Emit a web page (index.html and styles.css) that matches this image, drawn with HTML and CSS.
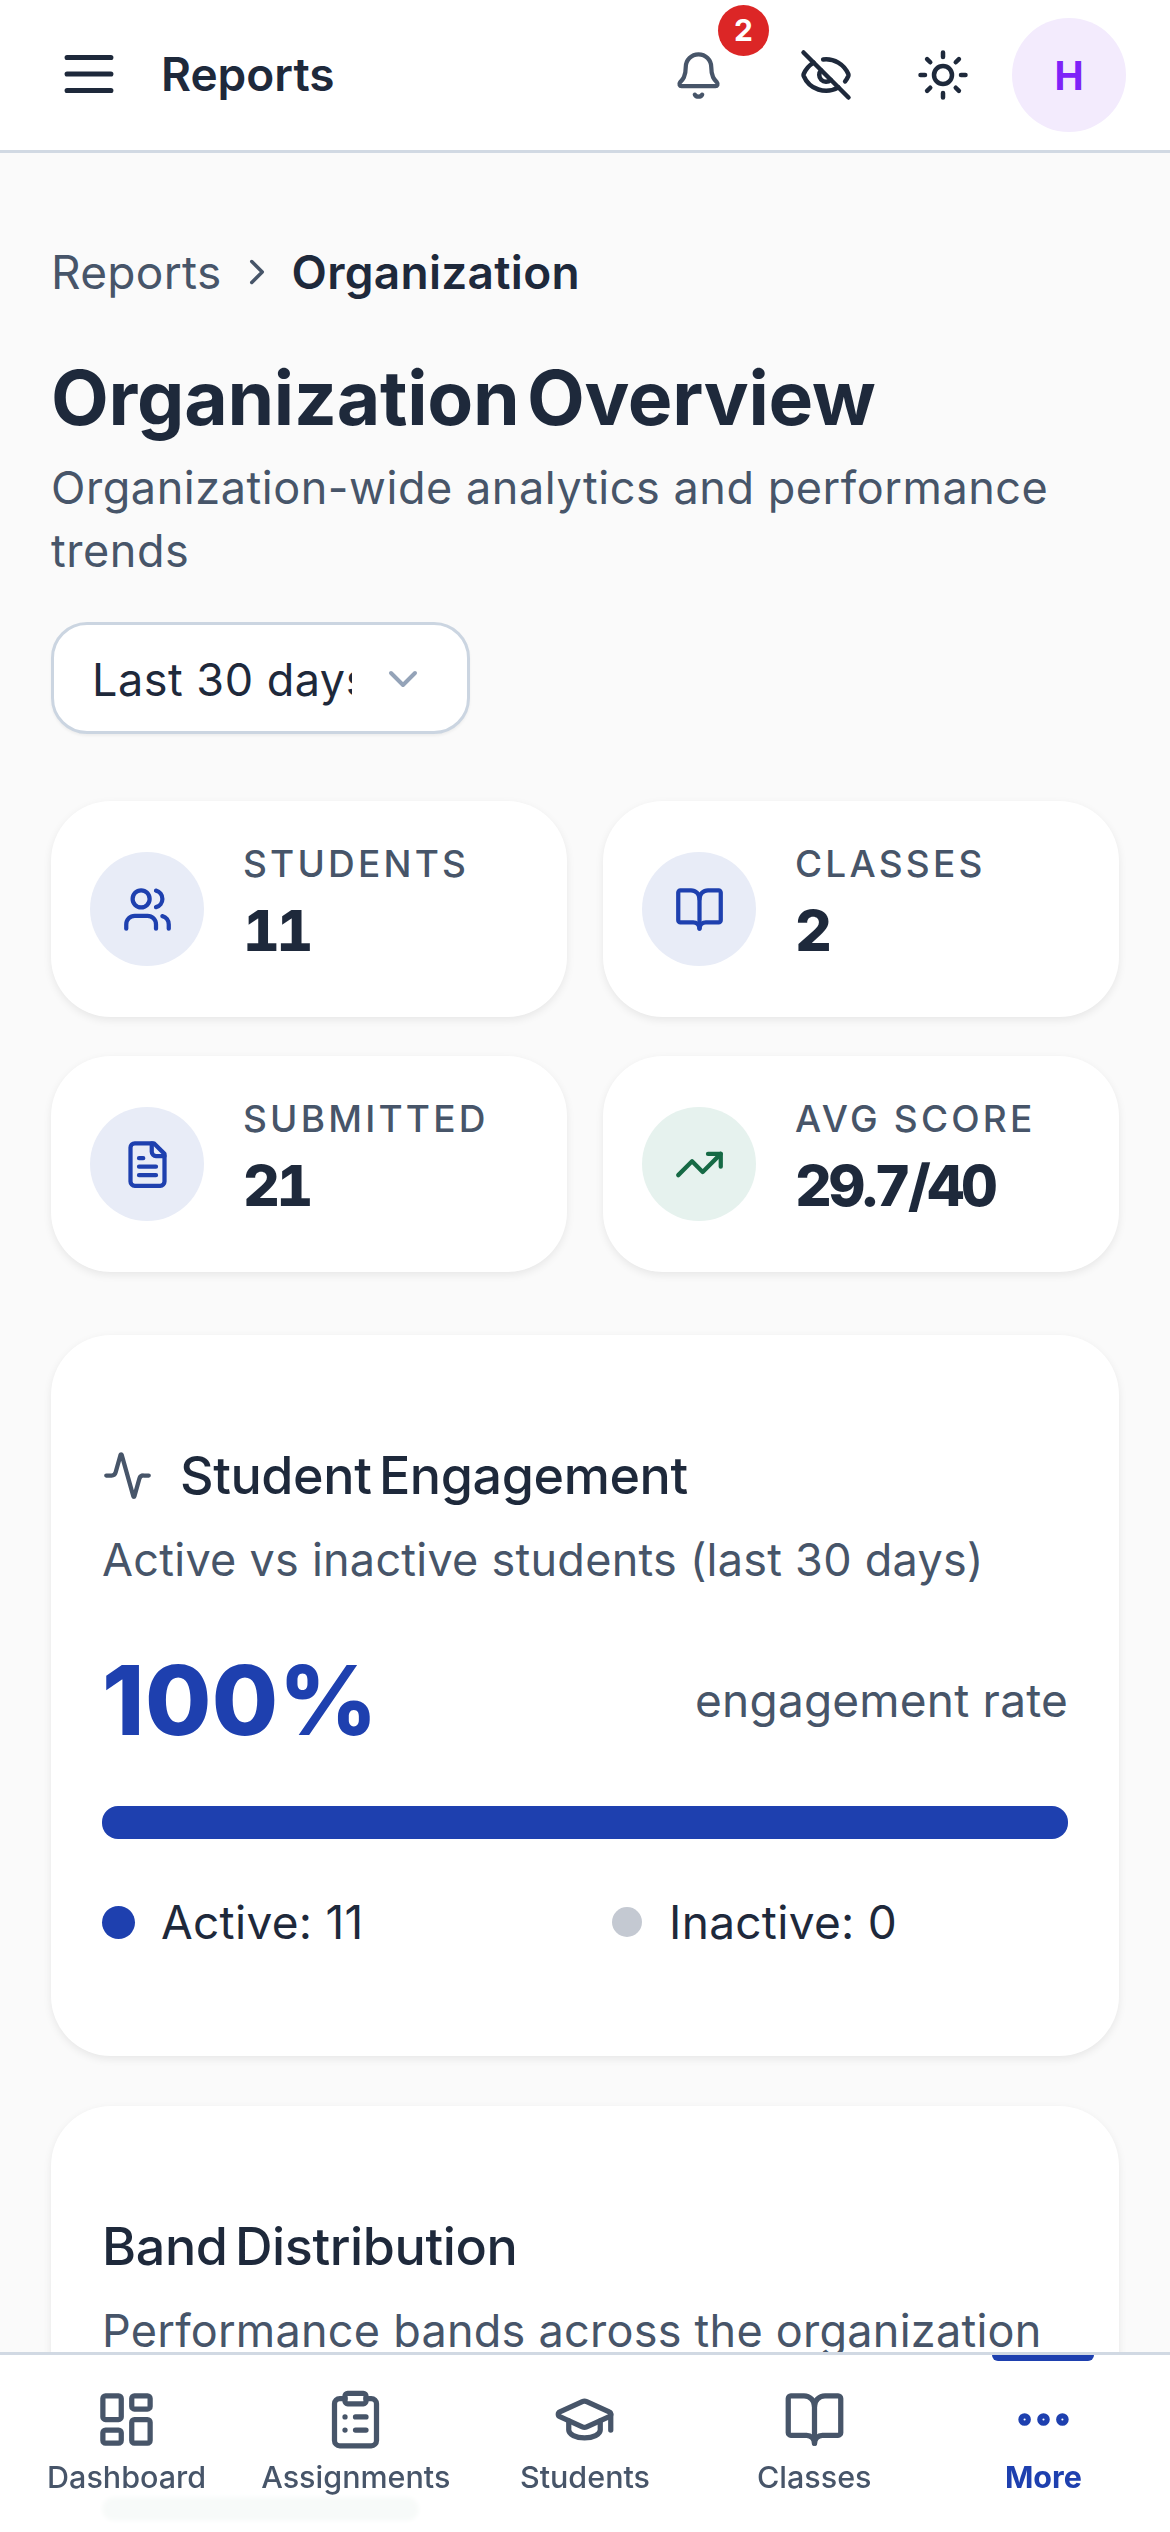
FILE: index.html
```html
<!DOCTYPE html>
<html>
  <head>
    <title>Organization Overview</title>
    <link rel="stylesheet" href="styles.css">
  </head>

  <body>
    <header class="topbar">
      <svg class="icon icon-menu" viewBox="0 0 24 24"><path d="M4.7 6.5h14.6M4.7 12h14.6M4.7 17.5h14.6" /></svg>
      <span class="topbar-title">Reports</span>
      <div class="topbar-actions">
        <div class="bell">
          <svg class="icon icon-bell" viewBox="0 0 24 24"><path d="M10.268 21a2 2 0 0 0 3.464 0" /><path d="M3.262 15.326A1 1 0 0 0 4 17h16a1 1 0 0 0 .74-1.673C19.41 13.956 18 12.499 18 8A6 6 0 0 0 6 8c0 4.499-1.411 5.956-2.738 7.326" /></svg>
          <span class="badge">2</span>
        </div>
        <svg class="icon icon-top icon-eye" viewBox="0 0 24 24"><path d="M10.733 5.076a10.744 10.744 0 0 1 11.205 6.575 1 1 0 0 1 0 .696 10.747 10.747 0 0 1-1.444 2.49" /><path d="M14.084 14.158a3 3 0 0 1-4.242-4.242" /><path d="M17.479 17.499a10.75 10.75 0 0 1-15.417-5.151 1 1 0 0 1 0-.696 10.75 10.75 0 0 1 4.446-5.143" /><path d="m2 2 20 20" /></svg>
        <svg class="icon icon-top icon-sun" viewBox="0 0 24 24"><circle cx="12" cy="12" r="4" /><path d="M12 2v2M12 20v2M4.93 4.93l1.41 1.41M17.66 17.66l1.41 1.41M2 12h2M20 12h2M6.34 17.66l-1.41 1.41M19.07 4.93l-1.41 1.41" /></svg>
        <div class="avatar">H</div>
      </div>
    </header>

    <main class="content">
      <nav class="crumbs">
        <span class="crumb-link">Reports</span>
        <svg class="icon icon-crumb" viewBox="0 0 24 24"><path d="m9 18 6-6-6-6" /></svg>
        <span class="crumb-current">Organization</span>
      </nav>

      <h1 class="page-title">Organization Overview</h1>
      <p class="page-sub">Organization-wide analytics and performance trends</p>

      <div class="range-select">
        <span class="range-value">Last 30 days</span>
        <svg class="icon icon-range" viewBox="0 0 24 24"><path d="m6 9 6 6 6-6" /></svg>
      </div>

      <section class="stats">
        <div class="stat">
          <div class="stat-icon">
            <svg class="icon icon-stat" viewBox="0 0 24 24"><path d="M16 21v-2a4 4 0 0 0-4-4H6a4 4 0 0 0-4 4v2" /><circle cx="9" cy="7" r="4" /><path d="M22 21v-2a4 4 0 0 0-3-3.87" /><path d="M16 3.13a4 4 0 0 1 0 7.75" /></svg>
          </div>
          <div class="stat-text">
            <div class="stat-label">STUDENTS</div>
            <div class="stat-value">11</div>
          </div>
        </div>
        <div class="stat">
          <div class="stat-icon">
            <svg class="icon icon-stat" viewBox="0 0 24 24"><path d="M12 7v14" /><path d="M3 18a1 1 0 0 1-1-1V4a1 1 0 0 1 1-1h5a4 4 0 0 1 4 4 4 4 0 0 1 4-4h5a1 1 0 0 1 1 1v13a1 1 0 0 1-1 1h-6a3 3 0 0 0-3 3 3 3 0 0 0-3-3z" /></svg>
          </div>
          <div class="stat-text">
            <div class="stat-label">CLASSES</div>
            <div class="stat-value">2</div>
          </div>
        </div>
        <div class="stat">
          <div class="stat-icon">
            <svg class="icon icon-stat" viewBox="0 0 24 24"><path d="M15 2H6a2 2 0 0 0-2 2v16a2 2 0 0 0 2 2h12a2 2 0 0 0 2-2V7Z" /><path d="M14 2v4a2 2 0 0 0 2 2h4" /><path d="M10 9H8M16 13H8M16 17H8" /></svg>
          </div>
          <div class="stat-text">
            <div class="stat-label">SUBMITTED</div>
            <div class="stat-value">21</div>
          </div>
        </div>
        <div class="stat">
          <div class="stat-icon stat-icon-green">
            <svg class="icon icon-stat" viewBox="0 0 24 24"><path d="M16 7h6v6" /><path d="m22 7-8.5 8.5-5-5L2 17" /></svg>
          </div>
          <div class="stat-text">
            <div class="stat-label">AVG SCORE</div>
            <div class="stat-value">29.7/40</div>
          </div>
        </div>
      </section>

      <section class="card">
        <div class="card-head">
          <svg class="icon icon-activity" viewBox="0 0 24 24"><path d="M22 12h-2.48a2 2 0 0 0-1.93 1.46l-2.35 8.36a.25.25 0 0 1-.48 0L9.24 2.18a.25.25 0 0 0-.48 0l-2.35 8.36A2 2 0 0 1 4.49 12H2" /></svg>
          <h2 class="card-title">Student Engagement</h2>
        </div>
        <p class="card-sub">Active vs inactive students (last 30 days)</p>
        <div class="rate-row">
          <span class="rate-value">100%</span>
          <span class="rate-label">engagement rate</span>
        </div>
        <div class="bar"></div>
        <div class="legend">
          <div class="legend-item"><span class="dot dot-active"></span>Active: 11</div>
          <div class="legend-item"><span class="dot dot-inactive"></span>Inactive: 0</div>
        </div>
      </section>

      <section class="card">
        <div class="card-head">
          <h2 class="card-title">Band Distribution</h2>
        </div>
        <p class="card-sub">Performance bands across the organization</p>
        <div class="band-pill"></div>
      </section>
    </main>

    <nav class="tabbar">
      <div class="tab">
        <svg class="icon icon-tab" viewBox="0 0 24 24"><rect x="3" y="3" width="7" height="9" rx="1" /><rect x="14" y="3" width="7" height="5" rx="1" /><rect x="14" y="12" width="7" height="9" rx="1" /><rect x="3" y="16" width="7" height="5" rx="1" /></svg>
        <span>Dashboard</span>
      </div>
      <div class="tab">
        <svg class="icon icon-tab" viewBox="0 0 24 24"><rect x="8" y="2" width="8" height="4" rx="1" /><path d="M16 4h2a2 2 0 0 1 2 2v14a2 2 0 0 1-2 2H6a2 2 0 0 1-2-2V6a2 2 0 0 1 2-2h2" /><path d="M12 11h4M12 16h4M8 11h.01M8 16h.01" /></svg>
        <span>Assignments</span>
      </div>
      <div class="tab">
        <svg class="icon icon-tab" viewBox="0 0 24 24"><path d="M21.42 10.922a1 1 0 0 0-.019-1.838L12.83 5.18a2 2 0 0 0-1.66 0L2.6 9.08a1 1 0 0 0 0 1.832l8.57 3.908a2 2 0 0 0 1.66 0z" /><path d="M22 10v6" /><path d="M6 12.5V16a6 3 0 0 0 12 0v-3.5" /></svg>
        <span>Students</span>
      </div>
      <div class="tab">
        <svg class="icon icon-tab" viewBox="0 0 24 24"><path d="M12 7v14" /><path d="M3 18a1 1 0 0 1-1-1V4a1 1 0 0 1 1-1h5a4 4 0 0 1 4 4 4 4 0 0 1 4-4h5a1 1 0 0 1 1 1v13a1 1 0 0 1-1 1h-6a3 3 0 0 0-3 3 3 3 0 0 0-3-3z" /></svg>
        <span>Classes</span>
      </div>
      <div class="tab tab-active">
        <span class="tab-marker"></span>
        <svg class="icon icon-tab" viewBox="0 0 24 24"><circle cx="12" cy="12" r="1.4" /><circle cx="19.2" cy="12" r="1.4" /><circle cx="4.8" cy="12" r="1.4" /></svg>
        <span>More</span>
      </div>
    </nav>
  </body>
</html>
```

FILE: styles.css
```css
* {
  box-sizing: border-box;
}

body {
  margin: 0;
  height: 2532px;
  overflow: hidden;
  background-color: #fafafa;
  color: #1e293b;
  font-family: "Inter", "Noto Sans", sans-serif;
}

h1, h2, p {
  margin: 0;
}

.icon {
  display: block;
  flex: none;
  fill: none;
  stroke: currentColor;
  stroke-width: 2;
  stroke-linecap: round;
  stroke-linejoin: round;
}

/* top bar */

.topbar {
  display: flex;
  align-items: center;
  height: 153px;
  padding: 0 44px 0 53px;
  background-color: #fff;
  border-bottom: 3px solid #d1d9e3;
}

.icon-menu {
  width: 72px;
  height: 72px;
  margin-bottom: 2px;
  stroke-width: 1.7;
}

.topbar-title {
  margin: 0 0 2px 36px;
  font-size: 46px;
  font-weight: 600;
}

.topbar-actions {
  display: flex;
  align-items: center;
  margin-left: auto;
}

.bell {
  position: relative;
  margin-right: 75px;
  color: #475569;
}

.icon-bell {
  width: 51px;
  height: 51px;
}

.badge {
  position: absolute;
  top: -45px;
  left: 45px;
  display: flex;
  align-items: center;
  justify-content: center;
  width: 51px;
  height: 51px;
  border-radius: 50%;
  background-color: #dc2626;
  color: #fff;
  font-size: 30px;
  font-weight: 700;
}

.icon-top {
  width: 54px;
  height: 54px;
}

.icon-eye {
  margin-right: 63px;
}

.icon-sun {
  margin-right: 42px;
}

.avatar {
  display: flex;
  align-items: center;
  justify-content: center;
  width: 114px;
  height: 114px;
  border-radius: 50%;
  background-color: #f3ebfd;
  color: #7e22f8;
  font-size: 39px;
  font-weight: 700;
}

/* page head */

.content {
  padding: 92px 51px 0 51px;
}

.crumbs {
  display: flex;
  align-items: center;
  height: 54px;
  font-size: 46px;
  letter-spacing: 0.3px;
}

.crumb-link {
  color: #475569;
}

.icon-crumb {
  width: 42px;
  height: 42px;
  margin: 0 14px;
  color: #475569;
}

.crumb-current {
  font-weight: 600;
}

.page-title {
  margin-top: 54px;
  font-size: 75px;
  line-height: 90px;
  font-weight: 700;
  letter-spacing: -0.25px;
  word-spacing: -10px;
}

.page-sub {
  margin-top: 13px;
  font-size: 45px;
  line-height: 63px;
  letter-spacing: 0.55px;
  color: #475569;
}

.range-select {
  display: flex;
  align-items: center;
  width: 419px;
  height: 112px;
  margin-top: 40px;
  padding: 2px 38px 0;
  background-color: #fff;
  border: 3px solid #cbd5e1;
  border-radius: 36px;
  box-shadow: 0 2px 3px rgba(0, 0, 0, 0.05);
}

.range-value {
  width: 260px;
  overflow: hidden;
  white-space: nowrap;
  font-size: 45px;
  letter-spacing: 0.5px;
}

.icon-range {
  width: 48px;
  height: 48px;
  margin-left: 27px;
  color: #94a3b8;
}

/* stat cards */

.stats {
  display: grid;
  grid-template-columns: 516px 516px;
  gap: 39px 36px;
  margin-top: 67px;
}

.stat {
  display: flex;
  align-items: center;
  height: 216px;
  padding: 0 0 0 39px;
  background-color: #fff;
  border-radius: 60px;
  box-shadow: 0 3px 9px rgba(0, 0, 0, 0.08);
}

.stat-icon {
  display: flex;
  align-items: center;
  justify-content: center;
  flex: none;
  width: 114px;
  height: 114px;
  margin-right: 39px;
  border-radius: 50%;
  background-color: #e8ecf7;
  color: #1e40af;
}

.stat-icon-green {
  background-color: #e6f2ee;
  color: #166a45;
}

.icon-stat {
  width: 51px;
  height: 51px;
}

.stat-text {
  margin-bottom: 12px;
}

.stat-label {
  font-size: 37px;
  line-height: 48px;
  font-weight: 500;
  letter-spacing: 3.2px;
  color: #475569;
}

.stat-value {
  margin-top: 7px;
  font-size: 57px;
  line-height: 72px;
  font-weight: 800;
  letter-spacing: -3.2px;
  font-variant-numeric: tabular-nums;
}

/* wide cards */

.card {
  margin-top: 63px;
  padding: 104px 51px;
  background-color: #fff;
  border-radius: 60px;
  box-shadow: 0 3px 9px rgba(0, 0, 0, 0.08);
}

.card + .card {
  margin-top: 50px;
}

.card-head {
  display: flex;
  align-items: center;
  height: 72px;
}

.icon-activity {
  width: 51px;
  height: 51px;
  margin: 0 27px 0 0;
  color: #475569;
}

.card-title {
  font-size: 52px;
  font-weight: 500;
  letter-spacing: -0.4px;
  word-spacing: -6px;
}

.card-sub {
  margin-top: 17px;
  font-size: 45px;
  line-height: 63px;
  letter-spacing: 0.25px;
  color: #475569;
}

.rate-row {
  display: flex;
  align-items: center;
  justify-content: space-between;
  height: 110px;
  margin-top: 54px;
}

.rate-value {
  font-size: 96px;
  font-weight: 800;
  letter-spacing: 0.5px;
  color: #1e40af;
}

.rate-label {
  font-size: 46px;
  letter-spacing: 0.2px;
  color: #475569;
}

.bar {
  height: 33px;
  margin-top: 51px;
  border-radius: 16px;
  background-color: #1e40af;
}

.legend {
  display: grid;
  grid-template-columns: 1fr 1fr;
  gap: 54px;
  margin-top: 53px;
}

.legend-item {
  display: flex;
  align-items: center;
  height: 60px;
  font-size: 46px;
  letter-spacing: 0.3px;
}

.dot {
  width: 33px;
  height: 33px;
  margin-right: 26px;
  border-radius: 50%;
}

.dot-active {
  background-color: #1e40af;
}

.dot-inactive {
  width: 30px;
  height: 30px;
  margin-right: 27px;
  background-color: #c4c9d2;
}

.band-pill {
  width: 317px;
  height: 24px;
  margin-top: 135px;
  border-radius: 12px;
  background-color: #166a45;
}

/* bottom tabs */

.tabbar {
  position: fixed;
  left: 0;
  right: 0;
  bottom: 0;
  display: grid;
  grid-template-columns: repeat(5, 1fr);
  height: 180px;
  padding: 0 12px;
  background-color: rgba(255, 255, 255, 0.97);
  backdrop-filter: blur(2px);
  border-top: 3px solid #d1d9e3;
}

.tab {
  position: relative;
  display: flex;
  flex-direction: column;
  align-items: center;
  padding-top: 33px;
  color: #475569;
  font-size: 30.5px;
  font-weight: 500;
}

.tab-active {
  color: #1e40af;
  font-weight: 700;
}

.tab-marker {
  position: absolute;
  top: 0;
  left: 50%;
  width: 102px;
  height: 6px;
  margin-left: -51px;
  border-radius: 0 0 6px 6px;
  background-color: #1e40af;
}

.icon-tab {
  width: 63px;
  height: 63px;
  margin-bottom: 7px;
}
```
